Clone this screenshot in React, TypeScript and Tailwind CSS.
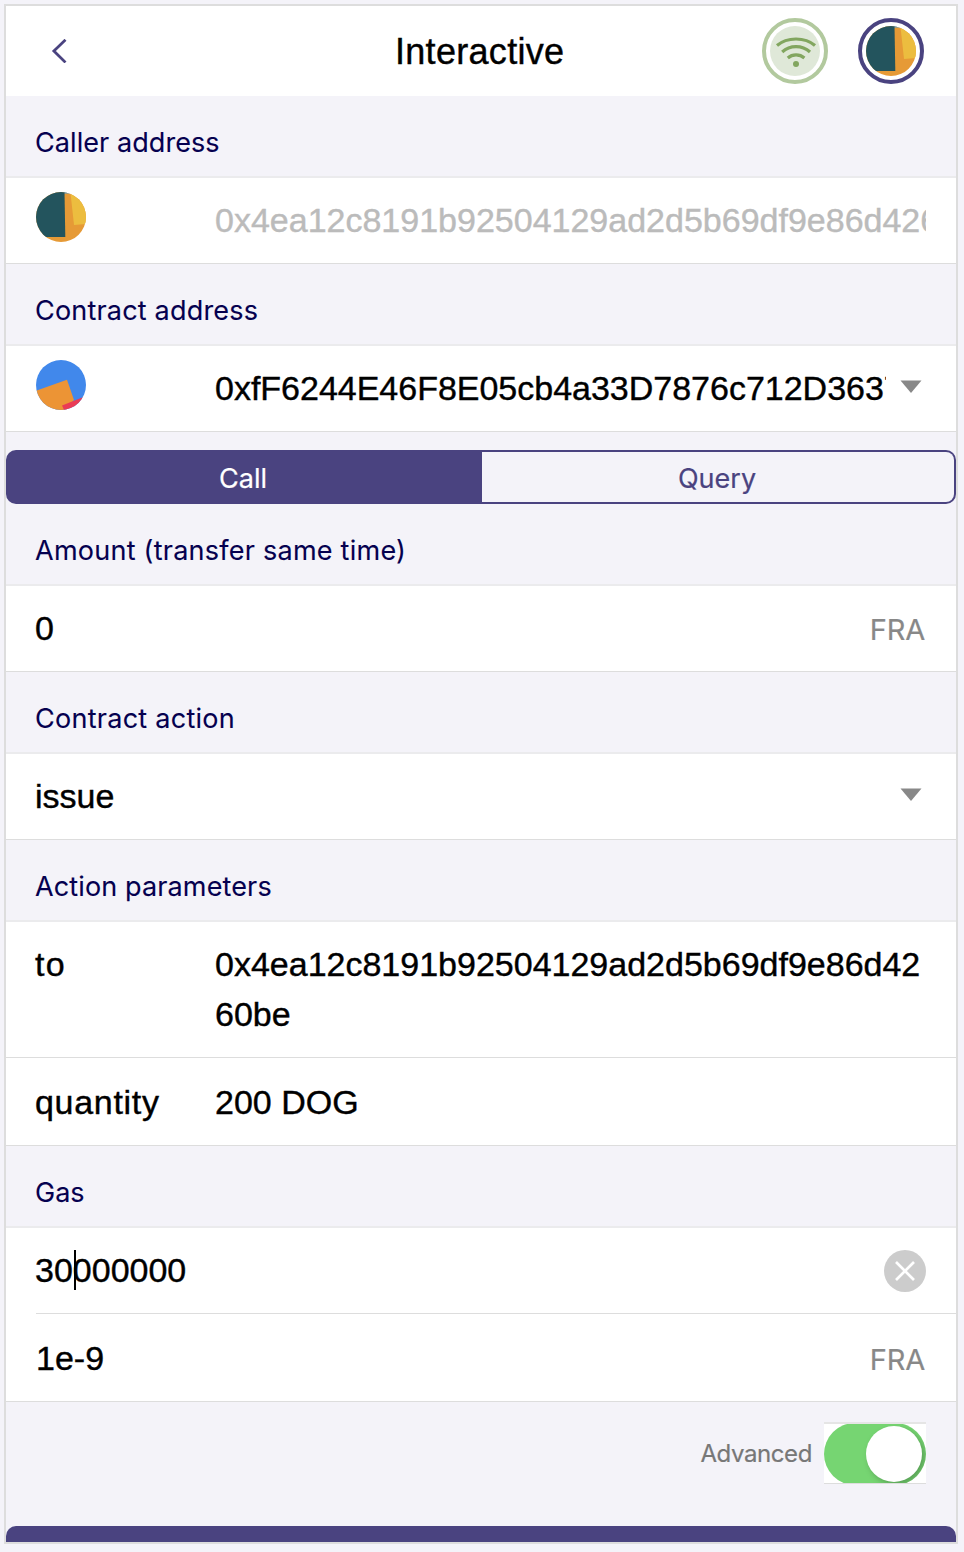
import type { ReactNode } from 'react';

function Label({ children, spacing }: { children: ReactNode; spacing: string }) {
  return (
    <div className="h-[82px] shrink-0 border-b-2 border-[#ebebed] pl-[29px] pt-[27px] font-['Inter'] text-[27px] leading-[40px] text-[#05004f] [-webkit-text-stroke:0.1px_currentColor]">
      <span className={spacing}>{children}</span>
    </div>
  );
}

function Row({ children, height = 'h-[86px] pb-[2px]' }: { children: ReactNode; height?: string }) {
  return (
    <div className={`flex shrink-0 items-center border-b border-[#dddddd] bg-white pl-[29px] pr-[30px] text-[34px] leading-[50px] text-black [-webkit-text-stroke:0.4px_currentColor] ${height}`}>
      {children}
    </div>
  );
}

function Unit() {
  return (
    <span className="ml-auto pr-px pt-[5px] font-['Inter'] text-[29px] tracking-[-0.2px] text-[#888888] [-webkit-text-stroke:0.2px_currentColor]">
      FRA
    </span>
  );
}

function Caret() {
  return (
    <svg className="mb-[2px] mr-[4px] ml-auto shrink-0" width="22" height="14" viewBox="0 0 22 14">
      <path d="M0.5 0.5H21.5L11 13Z" fill="#888888" />
    </svg>
  );
}

function CallerAvatar() {
  return (
    <svg className="shrink-0 rounded-full" width="50" height="50" viewBox="0 0 50 50">
      <rect width="50" height="50" fill="#e69a36" />
      <path d="M28 0H36L35 1.5H28Z" fill="#4d9ad0" />
      <path d="M0 0H28.5L29.3 45H0Z" fill="#23545d" />
      <path d="M34.5 1L50 0V32L38 33Z" fill="#ecbd3f" />
    </svg>
  );
}

function ContractAvatar() {
  return (
    <svg className="shrink-0 rounded-full" width="50" height="50" viewBox="0 0 50 50">
      <rect width="50" height="50" fill="#4188eb" />
      <path d="M0 30.8L31 19.7L38 40L28 50H0Z" fill="#ec9435" />
      <path d="M26 45.5L50 36V50H28Z" fill="#ea3b54" />
    </svg>
  );
}

export default function App() {
  return (
    <div className="h-[1552px] w-[964px] overflow-hidden bg-[#f4f3f9] pl-1 pt-1 font-['Liberation_Sans',sans-serif]">
      <div className="flex h-[1540px] w-[954px] flex-col overflow-hidden border-2 border-[#dddddd]">
        <header className="flex h-[90px] shrink-0 items-center bg-white pl-[45px] pr-8">
          <svg width="16" height="24" viewBox="0 0 16 24" fill="none" stroke="#4a4380" strokeWidth="2.8">
            <path d="M14.5 0.8L2.9 12L14.5 23.4" />
          </svg>
          <h1 className="ml-[328px] pt-[2px] text-[36px] leading-[50px] tracking-[0.3px] text-black [-webkit-text-stroke:0.4px_currentColor]">Interactive</h1>
          <div className="ml-auto flex gap-[30px]">
            <div className="flex size-[66px] items-center justify-center rounded-full border-4 border-[#b2c99e]">
              <svg width="50" height="50" viewBox="0 0 50 50" fill="none" stroke="#82a65f" strokeWidth="3.2">
                <circle cx="25" cy="25" r="25" fill="#dfe8d8" stroke="none" />
                <path d="M7 19.5C17 10.8 35 10.8 45 19.5M12.2 26C20 18.8 32 18.8 40 26M17.8 32C22.5 27.9 29.5 27.9 34.4 32" />
                <circle cx="26" cy="38" r="3" fill="#82a65f" stroke="none" />
              </svg>
            </div>
            <div className="flex size-[66px] items-center justify-center rounded-full border-4 border-[#4a4380]">
              <CallerAvatar />
            </div>
          </div>
        </header>

        <Label spacing="tracking-[0.07px]">Caller address</Label>
        <Row>
          <div className="flex w-[180px] shrink-0 pb-[5px] pl-px"><CallerAvatar /></div>
          <div className="w-[711px] overflow-hidden whitespace-nowrap text-[#bbbbbb]">0x4ea12c8191b92504129ad2d5b69df9e86d4260be</div>
        </Row>

        <Label spacing="tracking-[0.19px]">Contract address</Label>
        <Row>
          <div className="flex w-[180px] shrink-0 pb-[5px] pl-px"><ContractAvatar /></div>
          <div className="w-[671px] shrink-0 overflow-hidden whitespace-nowrap tracking-[-0.01px]">0xfF6244E46F8E05cb4a33D7876c712D3637</div>
          <Caret />
        </Row>

        <div className="mt-[18px] flex h-[54px] shrink-0 font-['Inter'] text-[27px] [-webkit-text-stroke:0.2px_currentColor]">
          <div className="w-[476px] rounded-l-[10px] bg-[#4a4380] pr-[2px] pt-[2px] text-center leading-[54px] text-white">Call</div>
          <div className="flex-1 rounded-r-[10px] border-y-2 border-r-2 border-[#4a4380] pr-[2px] pt-px text-center leading-[52px] text-[#4a4380]">Query</div>
        </div>

        <Label spacing="tracking-[0.25px]">Amount (transfer same time)</Label>
        <Row>0<Unit /></Row>

        <Label spacing="tracking-[0.27px]">Contract action</Label>
        <Row>issue<Caret /></Row>

        <Label spacing="tracking-[0.13px]">Action parameters</Label>
        <Row height="h-[136px]">
          <div className="w-[180px] shrink-0 self-start pt-[17px] tracking-[1.4px]">to</div>
          <div className="w-[711px] self-start break-all pt-[17px]">0x4ea12c8191b92504129ad2d5b69df9e86d4260be</div>
        </Row>
        <Row height="h-[88px]">
          <div className="w-[180px] shrink-0 tracking-[0.7px]">quantity</div>
          <div>200 DOG</div>
        </Row>

        <Label spacing="tracking-[0px]">Gas</Label>
        <div className="shrink-0 border-b border-[#dddddd] bg-white text-[34px] leading-[50px] [-webkit-text-stroke:0.4px_currentColor]">
          <div className="ml-[30px] flex h-[86px] items-center border-b border-[#dddddd] pr-[30px]">
            <span className="ml-[-1px] pb-[2px]">30</span>
            <span className="z-10 ml-px mr-[-3px] mb-[2px] h-10 w-[2px] bg-black" />
            <span className="pb-[2px]">000000</span>
            <svg className="ml-auto" width="42" height="42" viewBox="0 0 42 42">
              <circle cx="21" cy="21" r="21" fill="#cccccc" />
              <path d="M12 12L30 30M30 12L12 30" stroke="white" strokeWidth="2.7" />
            </svg>
          </div>
          <div className="flex h-[87px] items-center pl-[30px] pr-[30px]">1e-9<Unit /></div>
        </div>

        <div className="mt-5 flex h-[62px] shrink-0 items-center justify-end pr-[30px]">
          <span className="mr-3 pt-[2px] font-['Inter'] text-[24px] tracking-[-0.4px] text-[#777777] [-webkit-text-stroke:0.2px_currentColor]">Advanced</span>
          <div className="h-[62px] w-[102px] overflow-hidden border-b border-t-2 border-b-[#dddddd] border-t-[#e5e5e5] bg-white">
            <div className="-mt-px h-[62px] w-[102px] overflow-hidden rounded-[31px] bg-[#76d572] pl-[42px] pt-[3px]">
              <div className="size-14 rounded-full bg-white shadow-[3px_3px_6px_rgba(0,0,0,0.25)]" />
            </div>
          </div>
        </div>
        <div className="mt-[42px] h-[60px] shrink-0 rounded-[10px] bg-[#4a4380]" />
      </div>
    </div>
  );
}
